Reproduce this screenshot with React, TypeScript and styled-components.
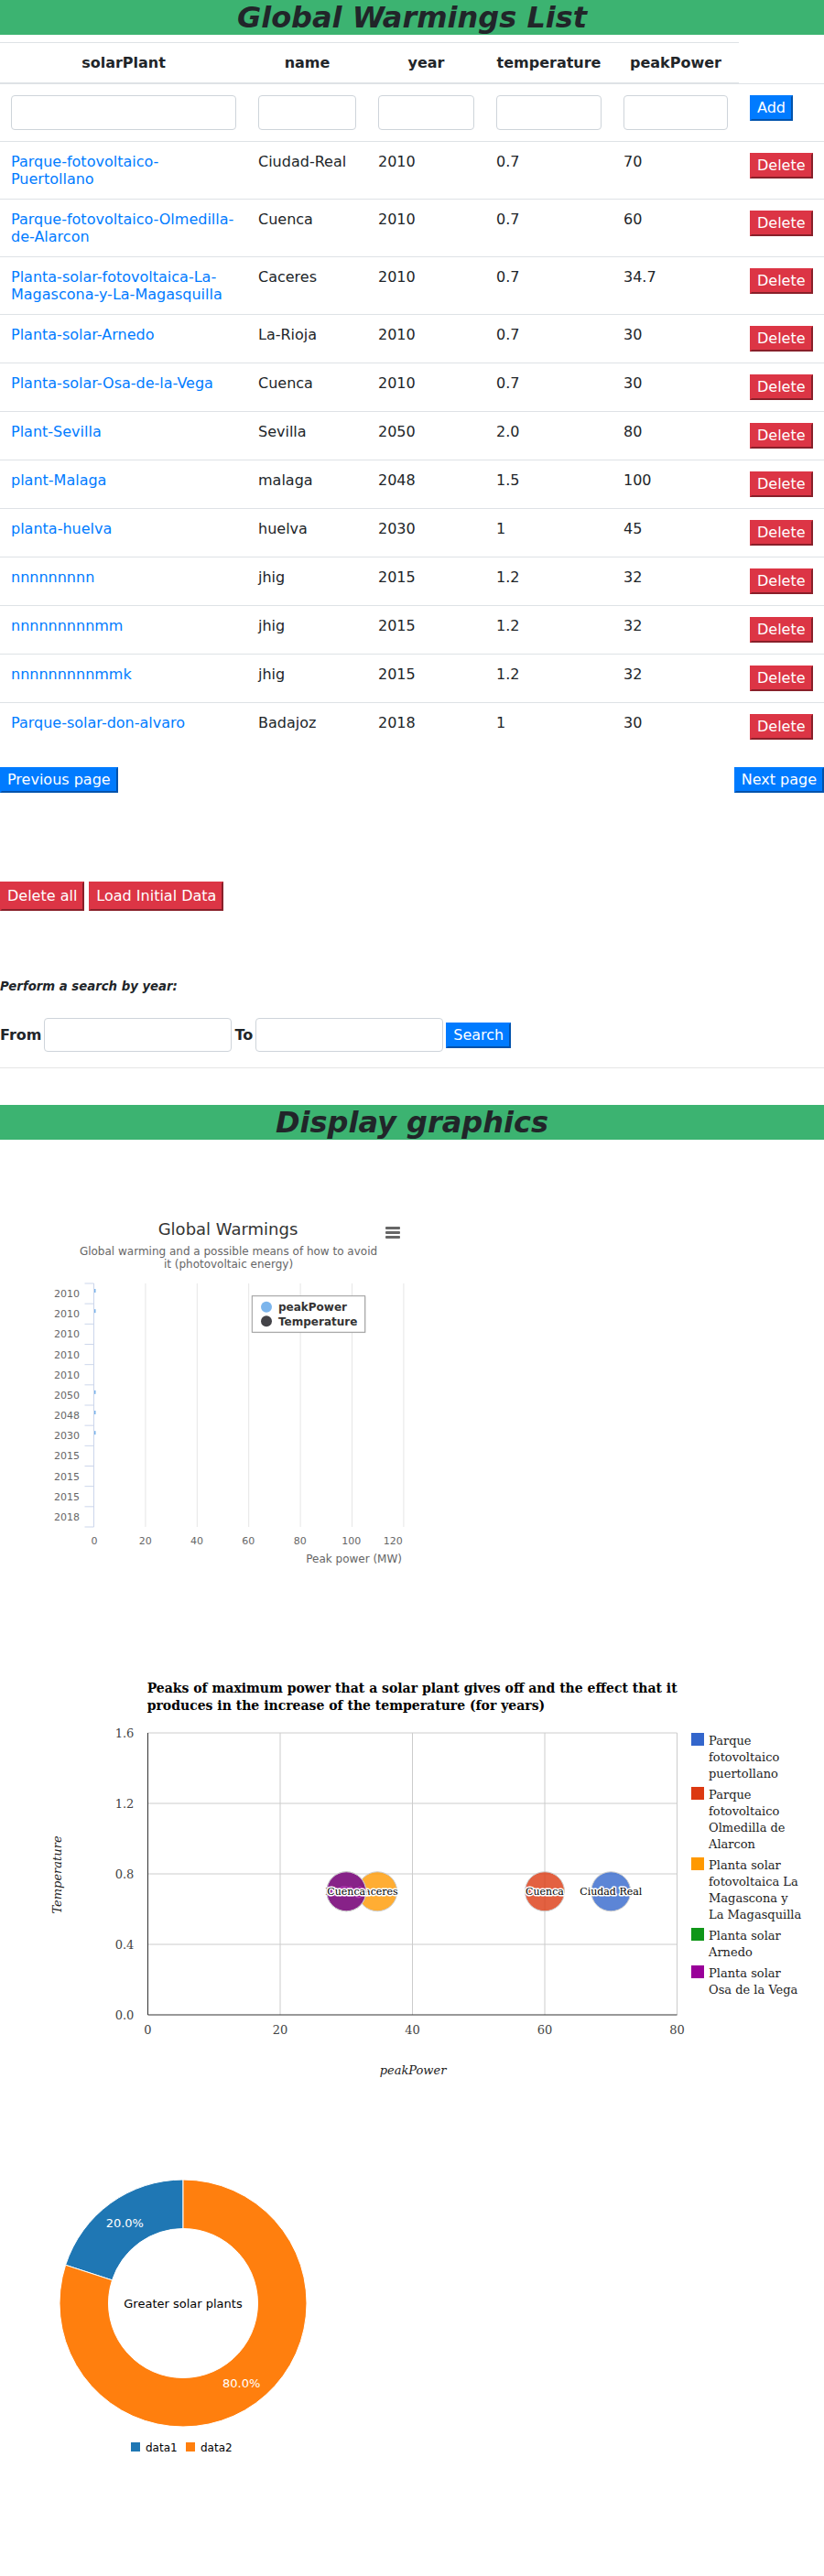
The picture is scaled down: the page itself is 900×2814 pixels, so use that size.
import React from 'react';
import styled, { createGlobalStyle } from 'styled-components';

type Plant = {
  solarPlant: string;
  name: string;
  year: string;
  temperature: string;
  peakPower: string;
};

const plants: Plant[] = [
  { solarPlant: 'Parque-fotovoltaico-Puertollano', name: 'Ciudad-Real', year: '2010', temperature: '0.7', peakPower: '70' },
  { solarPlant: 'Parque-fotovoltaico-Olmedilla-de-Alarcon', name: 'Cuenca', year: '2010', temperature: '0.7', peakPower: '60' },
  { solarPlant: 'Planta-solar-fotovoltaica-La-Magascona-y-La-Magasquilla', name: 'Caceres', year: '2010', temperature: '0.7', peakPower: '34.7' },
  { solarPlant: 'Planta-solar-Arnedo', name: 'La-Rioja', year: '2010', temperature: '0.7', peakPower: '30' },
  { solarPlant: 'Planta-solar-Osa-de-la-Vega', name: 'Cuenca', year: '2010', temperature: '0.7', peakPower: '30' },
  { solarPlant: 'Plant-Sevilla', name: 'Sevilla', year: '2050', temperature: '2.0', peakPower: '80' },
  { solarPlant: 'plant-Malaga', name: 'malaga', year: '2048', temperature: '1.5', peakPower: '100' },
  { solarPlant: 'planta-huelva', name: 'huelva', year: '2030', temperature: '1', peakPower: '45' },
  { solarPlant: 'nnnnnnnnn', name: 'jhig', year: '2015', temperature: '1.2', peakPower: '32' },
  { solarPlant: 'nnnnnnnnnmm', name: 'jhig', year: '2015', temperature: '1.2', peakPower: '32' },
  { solarPlant: 'nnnnnnnnnmmk', name: 'jhig', year: '2015', temperature: '1.2', peakPower: '32' },
  { solarPlant: 'Parque-solar-don-alvaro', name: 'Badajoz', year: '2018', temperature: '1', peakPower: '30' },
];

const columns = ['solarPlant', 'name', 'year', 'temperature', 'peakPower'];
const colWidths = [270, 131, 129, 139, 138, 93];

const GlobalStyle = createGlobalStyle`
  body {
    margin: 0;
    background: #fff;
    color: #212529;
    font-family: "DejaVu Sans", sans-serif;
    font-size: 16px;
  }
`;

const Banner = styled.h1`
  margin: 0;
  background: #3cb371;
  color: #212529;
  text-align: center;
  font-size: 32px;
  font-style: italic;
  font-weight: bold;
  line-height: 38px;
`;

const Table = styled.table`
  width: 100%;
  margin: 8px 0 18px;
  border-collapse: collapse;
  table-layout: fixed;
`;

const Col = styled.col<{ $w: number }>`
  width: ${({ $w }) => $w}px;
`;

const Th = styled.th`
  padding: 12px;
  border-top: 1px solid #dee2e6;
  border-bottom: 2px solid #dee2e6;
  text-align: center;
  vertical-align: bottom;
  font-weight: bold;
  line-height: normal;
`;

const Td = styled.td`
  padding: 12px;
  border-top: 1px solid #dee2e6;
  vertical-align: top;
  line-height: normal;
`;

const PlantLink = styled.a`
  color: #007bff;
  text-decoration: none;
`;

const TextInput = styled.input<{ $h?: number; $w?: number }>`
  box-sizing: border-box;
  display: block;
  width: ${({ $w }) => ($w ? `${$w}px` : '100%')};
  height: ${({ $h }) => $h ?? 38}px;
  margin: 0;
  padding: 6px 12px;
  border: 1px solid #ced4da;
  border-radius: 4px;
  background: #fff;
  font-family: "DejaVu Sans", sans-serif;
  font-size: 16px;
`;

const Button = styled.button<{ $tone: 'primary' | 'danger'; $big?: boolean }>`
  margin: 0;
  padding: ${({ $big }) => ($big ? '4px 6px' : '2px 6px')};
  border: 2px outset ${({ $tone }) => ($tone === 'danger' ? '#dc3545' : '#007bff')};
  border-radius: 0;
  background: ${({ $tone }) => ($tone === 'danger' ? '#dc3545' : '#007bff')};
  color: #fff;
  font-family: "DejaVu Sans", sans-serif;
  font-size: 16px;
  line-height: 20px;
  cursor: pointer;
`;

const Pager = styled.div`
  display: flex;
  justify-content: space-between;
  align-items: center;
`;

const BulkActions = styled.div`
  display: flex;
  gap: 5px;
  margin-top: 97px;
`;

const SearchTitle = styled.h5`
  margin: 75px 0 27px;
  font-size: 13.28px;
  font-style: italic;
  font-weight: bold;
  line-height: normal;
`;

const SearchRow = styled.div`
  display: flex;
  align-items: center;
  gap: 3px;
`;

const SearchLabel = styled.b`
  font-size: 16px;
`;

const Divider = styled.hr`
  margin: 17px 0 40px;
  border: 0;
  border-top: 1px solid rgba(0, 0, 0, 0.1);
`;

const ChartSvg = styled.svg<{ $serif?: boolean }>`
  display: block;
  font-family: ${({ $serif }) => ($serif ? '"DejaVu Serif", serif' : '"DejaVu Sans", sans-serif')};
`;

/* ---------- Highcharts-like bar chart ---------- */

const yearCats = ['2010', '2010', '2010', '2010', '2010', '2050', '2048', '2030', '2015', '2015', '2015', '2018'];

const BarChart: React.FC = () => {
  const left = 102.5;
  const top = 157;
  const bottom = 423;
  const step = 56.4;
  const catH = (bottom - top) / yearCats.length;
  const xLabels = [
    { v: '0', x: 103 },
    { v: '20', x: 158.7 },
    { v: '40', x: 215 },
    { v: '60', x: 271.3 },
    { v: '80', x: 327.7 },
    { v: '100', x: 383.7 },
    { v: '120', x: 429.3 },
  ];
  const tinyBars = [0, 1, 5, 6, 7];
  return (
    <ChartSvg width={460} height={520} viewBox="0 0 460 520">
      <text x={249} y={104} textAnchor="middle" fontSize={18} fill="#333">
        Global Warmings
      </text>
      <rect x={421} y={95} width={16} height={3} rx={1} fill="#666" />
      <rect x={421} y={100} width={16} height={3} rx={1} fill="#666" />
      <rect x={421} y={105} width={16} height={3} rx={1} fill="#666" />
      <text x={249.5} y={126} textAnchor="middle" fontSize={12} fill="#666">
        Global warming and a possible means of how to avoid
      </text>
      <text x={249.5} y={140} textAnchor="middle" fontSize={12} fill="#666">
        it (photovoltaic energy)
      </text>

      {[1, 2, 3, 4, 5, 6].map((i) => (
        <line key={i} x1={left + i * step} x2={left + i * step} y1={top} y2={bottom} stroke="#e6e6e6" />
      ))}
      <line x1={left} x2={left} y1={top} y2={bottom} stroke="#ccd6eb" />
      {yearCats.map((_, k) => (
        <line key={`t${k}`} x1={92.5} x2={left} y1={top + k * catH} y2={top + k * catH} stroke="#ccd6eb" />
      ))}
      <line x1={92.5} x2={left} y1={bottom} y2={bottom} stroke="#ccd6eb" />
      {yearCats.map((y, k) => (
        <text key={`c${k}`} x={87} y={top + (k + 0.5) * catH + 4} textAnchor="end" fontSize={11} fill="#666">
          {y}
        </text>
      ))}
      {tinyBars.map((k) => (
        <rect key={`b${k}`} x={left + 0.5} y={top + k * catH + 6} width={1.5} height={4} fill="#7cb5ec" />
      ))}
      {xLabels.map((l) => (
        <text key={l.v} x={l.x} y={442} textAnchor="middle" fontSize={11} fill="#666">
          {l.v}
        </text>
      ))}
      <text x={439} y={462} textAnchor="end" fontSize={12} fill="#666">
        Peak power (MW)
      </text>

      <rect x={276.3} y={171.7} width={123.4} height={39.6} fill="rgba(0,0,0,0.08)" />
      <rect x={275.3} y={170.7} width={123.4} height={39.6} fill="#fff" stroke="#999" />
      <circle cx={291} cy={182.7} r={6} fill="#7cb5ec" />
      <text x={304} y={187.3} fontSize={12} fontWeight="bold" fill="#333">
        peakPower
      </text>
      <circle cx={291} cy={198.3} r={6} fill="#434348" />
      <text x={304} y={202.9} fontSize={12} fontWeight="bold" fill="#333">
        Temperature
      </text>
    </ChartSvg>
  );
};

/* ---------- Google-like bubble chart ---------- */

const bubbles = [
  { x: 70, color: '#3366cc', label: 'Ciudad Real' },
  { x: 60, color: '#dc3912', label: 'Cuenca' },
  { x: 34.7, color: '#ff9900', label: 'Caceres' },
  { x: 30, color: '#109618', label: 'La Rioja' },
  { x: 30, color: '#990099', label: 'Cuenca' },
];

const legendItems = [
  { color: '#3366cc', lines: ['Parque', 'fotovoltaico', 'puertollano'] },
  { color: '#dc3912', lines: ['Parque', 'fotovoltaico', 'Olmedilla de', 'Alarcon'] },
  { color: '#ff9900', lines: ['Planta solar', 'fotovoltaica La', 'Magascona y', 'La Magasquilla'] },
  { color: '#109618', lines: ['Planta solar', 'Arnedo'] },
  { color: '#990099', lines: ['Planta solar', 'Osa de la Vega'] },
];

const BubbleChart: React.FC = () => {
  const left = 161.5;
  const right = 739.5;
  const top = 128;
  const bottom = 436;
  const xUnit = (right - left) / 80;
  const yUnit = (bottom - top) / 1.6;
  const yTicks = ['1.6', '1.2', '0.8', '0.4', '0.0'];
  const xTicks = ['0', '20', '40', '60', '80'];

  let legendTop = top;
  const legend = legendItems.map((item) => {
    const t = legendTop;
    legendTop += item.lines.length * 18 + 5;
    return { ...item, top: t };
  });

  return (
    <ChartSvg $serif width={900} height={535} viewBox="0 0 900 535">
      <text x={160.7} y={84.3} fontSize={14} fontWeight="bold" fill="#000">
        Peaks of maximum power that a solar plant gives off and the effect that it
      </text>
      <text x={160.7} y={102.7} fontSize={14} fontWeight="bold" fill="#000">
        produces in the increase of the temperature (for years)
      </text>

      {yTicks.slice(0, 4).map((_, i) => (
        <line key={`h${i}`} x1={left} x2={right} y1={top + i * 77} y2={top + i * 77} stroke="#ccc" />
      ))}
      {xTicks.slice(1).map((_, i) => (
        <line key={`v${i}`} x1={left + (i + 1) * 20 * xUnit} x2={left + (i + 1) * 20 * xUnit} y1={top} y2={bottom} stroke="#ccc" />
      ))}
      <line x1={left} x2={left} y1={top} y2={bottom} stroke="#333" />
      <line x1={left} x2={right} y1={bottom} y2={bottom} stroke="#333" />

      {yTicks.map((t, i) => (
        <text key={`yl${t}`} x={146.4} y={top + i * 77 + 4.5} textAnchor="end" fontSize={13} fill="#444">
          {t}
        </text>
      ))}
      {xTicks.map((t, i) => (
        <text key={`xl${t}`} x={left + i * 20 * xUnit} y={457} textAnchor="middle" fontSize={13} fill="#444">
          {t}
        </text>
      ))}
      <text
        x={62}
        y={283}
        transform="rotate(-90 62 283)"
        textAnchor="middle"
        dominantBaseline="central"
        fontSize={13}
        fontStyle="italic"
        fill="#222"
      >
        Temperature
      </text>
      <text x={451} y={501} textAnchor="middle" fontSize={13} fontStyle="italic" fill="#222">
        peakPower
      </text>

      {bubbles.map((b, i) => {
        const cx = left + b.x * xUnit;
        const cy = bottom - 0.7 * yUnit;
        return (
          <g key={`bb${i}`}>
            <circle cx={cx} cy={cy} r={21.5} fill={b.color} fillOpacity={0.8} stroke="#ccc" />
            <text
              x={cx}
              y={cy + 4}
              textAnchor="middle"
              fontSize={11}
              fill="#000"
              stroke="#fff"
              strokeWidth={3}
              strokeLinejoin="round"
              paintOrder="stroke"
            >
              {b.label}
            </text>
          </g>
        );
      })}

      {legend.map((item) => (
        <g key={item.color}>
          <rect x={755} y={item.top} width={14} height={14} fill={item.color} />
          {item.lines.map((line, j) => (
            <text key={line} x={774} y={item.top + 12.5 + j * 18} fontSize={13} fill="#222">
              {line}
            </text>
          ))}
        </g>
      ))}
    </ChartSvg>
  );
};

/* ---------- C3-like donut ---------- */

const arcPath = (cx: number, cy: number, R: number, r: number, a0: number, a1: number) => {
  const rad = (a: number) => (a * Math.PI) / 180;
  const pt = (a: number, d: number) => [cx + d * Math.sin(rad(a)), cy - d * Math.cos(rad(a))];
  const large = a1 - a0 > 180 ? 1 : 0;
  const [x0, y0] = pt(a0, R);
  const [x1, y1] = pt(a1, R);
  const [x2, y2] = pt(a1, r);
  const [x3, y3] = pt(a0, r);
  return `M${x0},${y0} A${R},${R} 0 ${large} 1 ${x1},${y1} L${x2},${y2} A${r},${r} 0 ${large} 0 ${x3},${y3} Z`;
};

const DonutChart: React.FC = () => {
  const cx = 200;
  const cy = 216;
  return (
    <ChartSvg width={450} height={509} viewBox="0 0 450 509">
      <path d={arcPath(cx, cy, 135, 81.5, -72, 0)} fill="#1f77b4" stroke="#fff" />
      <path d={arcPath(cx, cy, 135, 81.5, 0, 288)} fill="#ff7f0e" stroke="#fff" />
      <text x={136.3} y={128.4} textAnchor="middle" dominantBaseline="central" fontSize={13} fill="#fff">
        20.0%
      </text>
      <text x={263.7} y={303.6} textAnchor="middle" dominantBaseline="central" fontSize={13} fill="#fff">
        80.0%
      </text>
      <text x={cx} y={cy} textAnchor="middle" dominantBaseline="central" fontSize={13} fill="#000">
        Greater solar plants
      </text>
      <rect x={143} y={368} width={10} height={10} fill="#1f77b4" />
      <text x={159} y={377.5} fontSize={12} fill="#000">
        data1
      </text>
      <rect x={203} y={368} width={10} height={10} fill="#ff7f0e" />
      <text x={219} y={377.5} fontSize={12} fill="#000">
        data2
      </text>
    </ChartSvg>
  );
};

const App: React.FC = () => {
  return (
    <>
      <GlobalStyle />
      <Banner>Global Warmings List</Banner>
      <Table>
        <colgroup>
          {colWidths.map((w, i) => (
            <Col key={i} $w={w} />
          ))}
        </colgroup>
        <thead>
          <tr>
            {columns.map((c) => (
              <Th key={c}>{c}</Th>
            ))}
          </tr>
        </thead>
        <tbody>
          <tr>
            {columns.map((c) => (
              <Td key={c}>
                <TextInput aria-label={c} />
              </Td>
            ))}
            <Td>
              <Button $tone="primary">Add</Button>
            </Td>
          </tr>
          {plants.map((p) => (
            <tr key={p.solarPlant}>
              <Td>
                <PlantLink href="#">{p.solarPlant}</PlantLink>
              </Td>
              <Td>{p.name}</Td>
              <Td>{p.year}</Td>
              <Td>{p.temperature}</Td>
              <Td>{p.peakPower}</Td>
              <Td>
                <Button $tone="danger">Delete</Button>
              </Td>
            </tr>
          ))}
        </tbody>
      </Table>

      <Pager>
        <Button $tone="primary">Previous page</Button>
        <Button $tone="primary">Next page</Button>
      </Pager>

      <BulkActions>
        <Button $tone="danger" $big>
          Delete all
        </Button>
        <Button $tone="danger" $big>
          Load Initial Data
        </Button>
      </BulkActions>

      <SearchTitle>Perform a search by year:</SearchTitle>
      <SearchRow>
        <SearchLabel>From</SearchLabel>
        <TextInput $w={205} $h={37} aria-label="from" />
        <SearchLabel>To</SearchLabel>
        <TextInput $w={205} $h={37} aria-label="to" />
        <Button $tone="primary">Search</Button>
      </SearchRow>
      <Divider />

      <Banner>Display graphics</Banner>
      <BarChart />
      <BubbleChart />
      <DonutChart />
    </>
  );
};

export default App;
